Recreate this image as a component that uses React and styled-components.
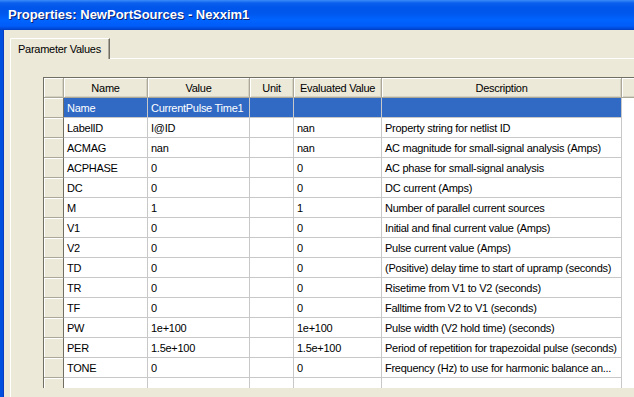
import React from "react";
import styled, { createGlobalStyle } from "styled-components";

const GlobalStyle = createGlobalStyle`
  html, body { margin: 0; padding: 0; overflow: hidden; background: #ECE9D8; }
  * { box-sizing: border-box; }
`;

const Window = styled.div`
  width: 634px;
  height: 397px;
  display: flex;
  flex-direction: column;
  font-family: "Liberation Sans", Arial, sans-serif;
  font-size: 11px;
  letter-spacing: -0.27px;
  color: #000;
  overflow: hidden;
`;

const TitleBar = styled.div`
  height: 30px;
  flex: none;
  display: flex;
  align-items: center;
  padding: 0 0 1px 8px;
  background: linear-gradient(
    to bottom,
    #3d8ef8 0px,
    #2a7cf5 1px,
    #0a5fee 3px,
    #0055ea 8px,
    #0058ee 14px,
    #0064ff 20px,
    #005cf8 26px,
    #0047d6 29px,
    #003cb8 30px
  );
`;

const Title = styled.span`
  font-family: "Liberation Sans", Arial, sans-serif;
  font-weight: bold;
  font-size: 13px;
  letter-spacing: 0;
  color: #fff;
  text-shadow: 1px 1px 0 #0a1e6e;
  white-space: nowrap;
`;

const Body = styled.div`
  flex: 1;
  display: flex;
  flex-direction: column;
  background: #ece9d8;
  border-left: 3px solid #0050e0;
  box-shadow: inset 1px 0 0 #0a3cc0;
  padding: 8px 0 0 7px;
  min-height: 0;
`;

const TabStrip = styled.div`
  display: flex;
  height: 20px;
  flex: none;
`;

const Tab = styled.div`
  height: 21px;
  margin-bottom: -1px;
  padding: 0 8px 0 7px;
  display: flex;
  align-items: center;
  background: #ece9d8;
  border-top: 1px solid #fff;
  border-left: 1px solid #fff;
  border-right: 1px solid #716f64;
  box-shadow: inset -1px 0 0 #aca899;
  border-top-left-radius: 2px;
  position: relative;
  z-index: 1;
  white-space: nowrap;
`;

const TabPanel = styled.div`
  flex: 1;
  min-height: 0;
  border-top: 1px solid #fff;
  border-left: 1px solid #fff;
  padding: 18px 0 0 32px;
  overflow: hidden;
`;

const Grid = styled.div`
  height: 311px;
  overflow: hidden;
  border-left: 1px solid #716f64;
  border-top: 1px solid #716f64;
  background: #fff;
  width: 700px;
`;

const COLS = "20px 84px 102px 44px 88px 240px 1fr";

const Row = styled.div`
  display: grid;
  grid-template-columns: ${COLS};
  height: 20px;
`;

const HeadCell = styled.div`
  background: #ece9d8;
  border-right: 1px solid #aca899;
  border-bottom: 1px solid #aca899;
  box-shadow: inset 1px 1px 0 #fff, inset -1px -1px 0 #d6d2c2;
  display: flex;
  align-items: center;
  justify-content: center;
  white-space: nowrap;
  overflow: hidden;
`;

const RowHead = styled.div`
  background: #ece9d8;
  border-right: 1px solid #716f64;
  border-bottom: 1px solid #aca899;
  box-shadow: inset 1px 1px 0 #fff;
`;

const Cell = styled.div`
  background: ${(p) => (p.$selected ? "#316ac5" : "#fff")};
  color: ${(p) => (p.$selected ? "#fff" : "#000")};
  border-right: 1px solid #c8c8c8;
  border-bottom: 1px solid #c8c8c8;
  padding: 0 0 0 3px;
  display: flex;
  align-items: center;
  white-space: nowrap;
  overflow: hidden;
`;

const Filler = styled.div`
  background: #fff;
`;

const rows = [
  ["Name", "CurrentPulse Time1", "", "", ""],
  ["LabelID", "I@ID", "", "nan", "Property string for netlist ID"],
  ["ACMAG", "nan", "", "nan", "AC magnitude for small-signal analysis (Amps)"],
  ["ACPHASE", "0", "", "0", "AC phase for small-signal analysis"],
  ["DC", "0", "", "0", "DC current (Amps)"],
  ["M", "1", "", "1", "Number of parallel current sources"],
  ["V1", "0", "", "0", "Initial and final current value (Amps)"],
  ["V2", "0", "", "0", "Pulse current value (Amps)"],
  ["TD", "0", "", "0", "(Positive) delay time to start of upramp (seconds)"],
  ["TR", "0", "", "0", "Risetime from V1 to V2 (seconds)"],
  ["TF", "0", "", "0", "Falltime from V2 to V1 (seconds)"],
  ["PW", "1e+100", "", "1e+100", "Pulse width (V2 hold time) (seconds)"],
  ["PER", "1.5e+100", "", "1.5e+100", "Period of repetition for trapezoidal pulse (seconds)"],
  ["TONE", "0", "", "0", "Frequency (Hz) to use for harmonic balance an..."],
  ["", "", "", "", ""],
];

export default function App() {
  return (
    <>
      <GlobalStyle />
      <Window>
        <TitleBar>
          <Title>Properties: NewPortSources - Nexxim1</Title>
        </TitleBar>
        <Body>
          <TabStrip>
            <Tab>Parameter Values</Tab>
          </TabStrip>
          <TabPanel>
            <Grid>
              <Row>
                <HeadCell />
                <HeadCell>Name</HeadCell>
                <HeadCell>Value</HeadCell>
                <HeadCell>Unit</HeadCell>
                <HeadCell>Evaluated Value</HeadCell>
                <HeadCell>Description</HeadCell>
                <HeadCell />
              </Row>
              {rows.map((r, i) => {
                const sel = i === 0;
                return (
                  <Row key={i}>
                    <RowHead />
                    <Cell $selected={sel}>{r[0]}</Cell>
                    <Cell $selected={sel}>{r[1]}</Cell>
                    <Cell $selected={sel}>{r[2]}</Cell>
                    <Cell $selected={sel}>{r[3]}</Cell>
                    <Cell $selected={sel}>{r[4]}</Cell>
                    <Filler />
                  </Row>
                );
              })}
            </Grid>
          </TabPanel>
        </Body>
      </Window>
    </>
  );
}
